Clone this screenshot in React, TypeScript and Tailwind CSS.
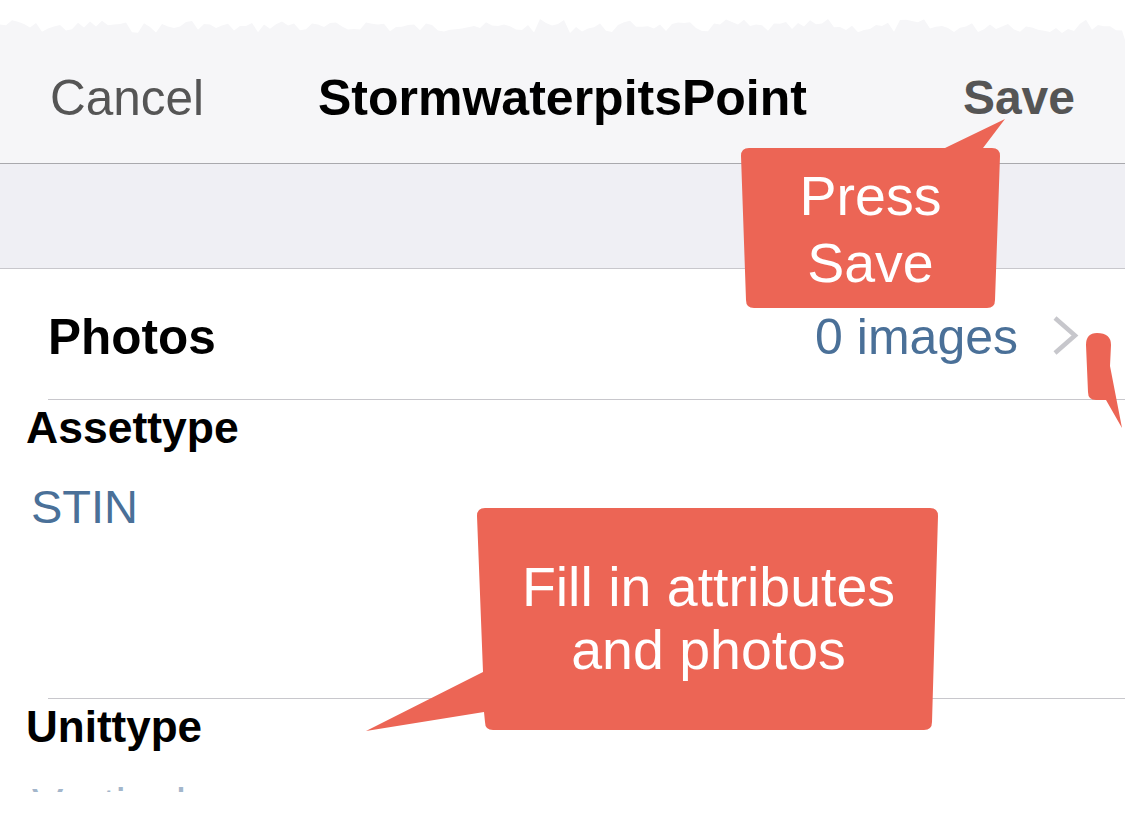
import React from "react";

const CORAL = "#ec6555";

// jagged torn-paper edge at the very top of the screenshot
function TornEdge() {
  let seed = 7;
  const rnd = () => {
    seed = (seed * 9301 + 49297) % 233280;
    return seed / 233280;
  };
  const pts: string[] = ["0,40"];
  for (let x = 0; x <= 1125; x += 6) {
    const y = 22 + rnd() * 11 - (x % 90 < 30 ? 3 : 0);
    pts.push(`${x},${y.toFixed(1)}`);
  }
  pts.push("1125,40");
  return (
    <svg className="absolute left-0 top-0" width="1125" height="40">
      <rect x="0" y="0" width="1125" height="40" fill="#ffffff" />
      <polygon points={pts.join(" ")} fill="#f6f6f8" />
    </svg>
  );
}

function Callouts() {
  return (
    <>
      <svg
        className="absolute left-0 top-0 pointer-events-none"
        width="1125"
        height="817"
      >
        <path
          fill={CORAL}
          d="M749,148 L945,148 L1005,119 L983,148 L992,148 Q1000,148 1000,156 L995,300 Q995,308 987,308 L754,308 Q746,308 746,300 L741,156 Q741,148 749,148 Z"
        />
        <path
          fill={CORAL}
          d="M485,508 L930,508 Q938,508 938,516 L932,722 Q932,730 924,730 L493,730 Q485,730 485,722 L484,712 L366,731 L483,672 L477,516 Q477,508 485,508 Z"
        />
        <path
          fill={CORAL}
          d="M1097,333 Q1111,333 1111,345 L1110,366 L1122,428 L1106,400 L1096,400 Q1088,400 1088,392 L1086,345 Q1086,333 1097,333 Z"
        />
      </svg>
      <div className="absolute left-[741px] top-[163px] w-[259px] text-center text-white text-[55.5px] leading-[67px]">
        Press
        <br />
        Save
      </div>
      <div className="absolute left-[478px] top-[556px] w-[461px] text-center text-white text-[55.5px] leading-[63px]">
        Fill in attributes
        <br />
        and photos
      </div>
    </>
  );
}

export default function App() {
  return (
    <div className="relative w-[1125px] h-[817px] overflow-hidden bg-white font-['Liberation_Sans',Arial,sans-serif]">
      {/* Nav bar */}
      <div className="relative h-[164px] bg-[#f6f6f8] border-b border-[#a9a9ad]">
        <TornEdge />
        <div className="relative grid grid-cols-[1fr_auto_1fr] items-center h-full pt-[33px] px-[50px]">
          <span className="text-[49.5px] leading-none text-[#555555]">Cancel</span>
          <span className="text-[50px] leading-none font-bold text-black">
            StormwaterpitsPoint
          </span>
          <span className="justify-self-end text-[48px] leading-none font-bold text-[#555555]">
            Save
          </span>
        </div>
      </div>

      {/* Section header gap */}
      <div className="h-[105px] bg-[#efeff4] border-b border-[#c8c7cc]" />

      {/* Photos row */}
      <div className="ml-[48px] h-[131px] border-b border-[#c8c7cc] flex items-center pt-[5px] pr-[45px]">
        <span className="text-[49.5px] leading-none font-bold text-black">Photos</span>
        <span className="ml-auto text-[50px] leading-none text-[#4a7098]">0 images</span>
        <svg className="ml-[34px] -mt-[2px]" width="28" height="42" viewBox="0 0 28 42">
          <polyline
            points="3,3 23,20.5 3,38"
            fill="none"
            stroke="#c7c7cc"
            strokeWidth="4.5"
          />
        </svg>
      </div>

      {/* Assettype */}
      <div className="h-[299px] ml-[48px] border-b border-[#c8c7cc]">
        <div className="-ml-[22px] pt-[6px] text-[44.5px] leading-none font-bold text-black">
          Assettype
        </div>
        <div className="-ml-[17px] mt-[32px] text-[47px] leading-none text-[#4a7098]">
          STIN
        </div>
      </div>

      {/* Unittype */}
      <div className="pl-[26px] pt-[6px]">
        <div className="text-[44px] leading-none font-bold text-black">Unittype</div>
        <div className="mt-[32px] h-[11px] overflow-hidden pl-[6px] text-[47px] leading-none text-[#4a7098] opacity-50">
          Vertical
        </div>
      </div>

      <Callouts />
    </div>
  );
}
